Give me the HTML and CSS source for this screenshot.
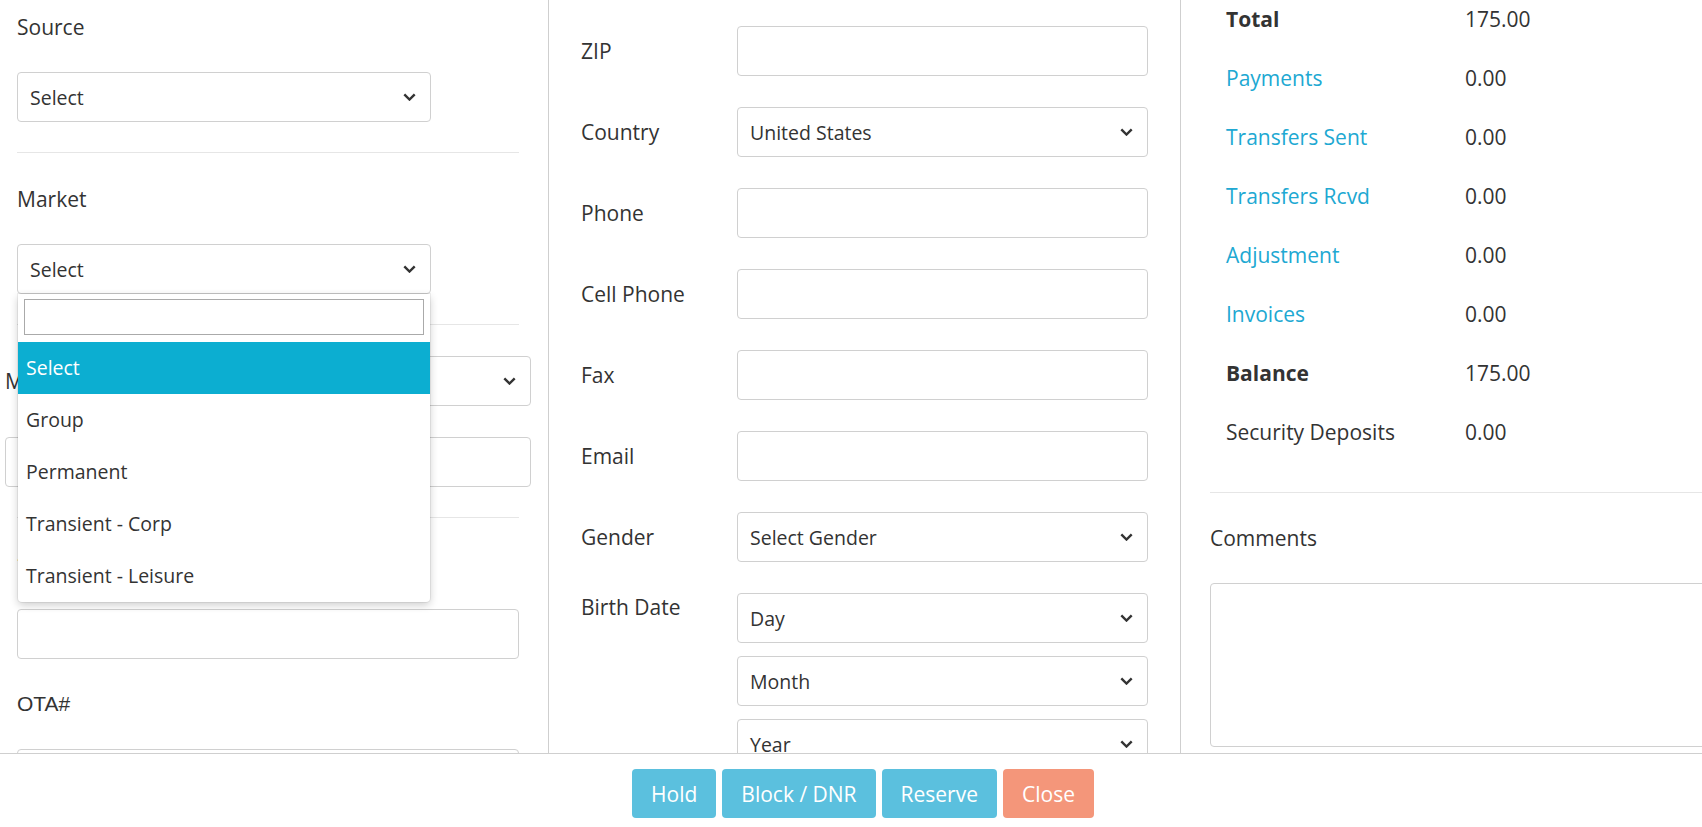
FILE: index.html
```html
<!DOCTYPE html>
<html lang="en">
<head>
<meta charset="utf-8">
<title>Reservation</title>
<link rel="stylesheet" href="styles.css">
</head>
<body>
<div class="page">
  <div class="main">
    <div class="col col-left">
      <div class="group first">
        <label class="lbl">Source</label>
        <div class="select"><span>Select</span><svg class="chev" width="13" height="8" viewBox="0 0 13 8"><path d="M1.3 1.3 L6.5 6.5 L11.7 1.3" fill="none" stroke="#333" stroke-width="2.4"/></svg></div>
      </div>
      <div class="group">
        <label class="lbl">Market</label>
        <div class="select-wrap">
          <div class="select"><span>Select</span><svg class="chev" width="13" height="8" viewBox="0 0 13 8"><path d="M1.3 1.3 L6.5 6.5 L11.7 1.3" fill="none" stroke="#333" stroke-width="2.4"/></svg></div>
          <div class="dropdown">
            <input class="dd-search" type="text">
            <ul class="dd-list">
              <li class="active">Select</li>
              <li>Group</li>
              <li>Permanent</li>
              <li>Transient - Corp</li>
              <li>Transient - Leisure</li>
            </ul>
          </div>
        </div>
      </div>
      <div class="group wide">
        <div class="wide-inner">
          <div class="hrow">
            <label class="hlbl">Meal Plan</label>
            <div class="select grow"><span>Select</span><svg class="chev" width="13" height="8" viewBox="0 0 13 8"><path d="M1.3 1.3 L6.5 6.5 L11.7 1.3" fill="none" stroke="#333" stroke-width="2.4"/></svg></div>
          </div>
          <input class="input full gap-top" type="text">
        </div>
      </div>
      <div class="group last">
        <label class="lbl"><span class="req">*</span> Company</label>
        <input class="input full" type="text">
        <label class="lbl arial gap-top">OTA#</label>
        <input class="input full" type="text">
      </div>
    </div>

    <div class="col col-mid">
      <div class="frow"><label>ZIP</label><input class="input mid" type="text"></div>
      <div class="frow"><label>Country</label><div class="select mid"><span>United States</span><svg class="chev" width="13" height="8" viewBox="0 0 13 8"><path d="M1.3 1.3 L6.5 6.5 L11.7 1.3" fill="none" stroke="#333" stroke-width="2.4"/></svg></div></div>
      <div class="frow"><label>Phone</label><input class="input mid" type="text"></div>
      <div class="frow"><label>Cell Phone</label><input class="input mid" type="text"></div>
      <div class="frow"><label>Fax</label><input class="input mid" type="text"></div>
      <div class="frow"><label>Email</label><input class="input mid" type="text"></div>
      <div class="frow"><label>Gender</label><div class="select mid"><span>Select Gender</span><svg class="chev" width="13" height="8" viewBox="0 0 13 8"><path d="M1.3 1.3 L6.5 6.5 L11.7 1.3" fill="none" stroke="#333" stroke-width="2.4"/></svg></div></div>
      <div class="frow top"><label>Birth Date</label>
        <div class="dates">
          <div class="select mid"><span>Day</span><svg class="chev" width="13" height="8" viewBox="0 0 13 8"><path d="M1.3 1.3 L6.5 6.5 L11.7 1.3" fill="none" stroke="#333" stroke-width="2.4"/></svg></div>
          <div class="select mid"><span>Month</span><svg class="chev" width="13" height="8" viewBox="0 0 13 8"><path d="M1.3 1.3 L6.5 6.5 L11.7 1.3" fill="none" stroke="#333" stroke-width="2.4"/></svg></div>
          <div class="select mid"><span>Year</span><svg class="chev" width="13" height="8" viewBox="0 0 13 8"><path d="M1.3 1.3 L6.5 6.5 L11.7 1.3" fill="none" stroke="#333" stroke-width="2.4"/></svg></div>
        </div>
      </div>
    </div>

    <div class="col col-right">
      <div class="summary">
        <div class="srow"><span class="k bold">Total</span><span class="v">175.00</span></div>
        <div class="srow"><a class="k link">Payments</a><span class="v">0.00</span></div>
        <div class="srow"><a class="k link">Transfers Sent</a><span class="v">0.00</span></div>
        <div class="srow"><a class="k link">Transfers Rcvd</a><span class="v">0.00</span></div>
        <div class="srow"><a class="k link">Adjustment</a><span class="v">0.00</span></div>
        <div class="srow"><a class="k link">Invoices</a><span class="v">0.00</span></div>
        <div class="srow"><span class="k bold">Balance</span><span class="v">175.00</span></div>
        <div class="srow"><span class="k">Security Deposits</span><span class="v">0.00</span></div>
      </div>
      <div class="comments">
        <label class="lbl">Comments</label>
        <textarea class="textarea"></textarea>
      </div>
    </div>
  </div>
  <div class="footer">
    <button class="btn info">Hold</button>
    <button class="btn info">Block / DNR</button>
    <button class="btn info">Reserve</button>
    <button class="btn danger">Close</button>
  </div>
</div>
</body>
</html>
```

FILE: styles.css
```css
html, body {
  margin: 0;
  padding: 0;
  background: #fff;
  overflow: hidden;
}
body {
  font-family: "Open Sans", "Noto Sans", sans-serif;
  color: #333;
}
.page {
  width: 1726px;
  height: 827px;
  display: flex;
  flex-direction: column;
}
.main {
  height: 753px;
  display: flex;
  overflow: hidden;
  flex-shrink: 0;
}
.col {
  box-sizing: border-box;
  height: 100%;
}
.col-left {
  width: 549px;
  border-right: 1px solid #cfcfcf;
  padding: 0 29px 0 17px;
}
.col-mid {
  width: 632px;
  border-right: 1px solid #cfcfcf;
  padding: 26px 32px 0 32px;
}
.col-right {
  flex: 1;
  padding-left: 29px;
  min-width: 0;
}

/* labels */
.lbl {
  display: block;
  font-size: 21px;
  line-height: 28px;
  margin-bottom: 31px;
}
.lbl.arial {
  font-family: "Liberation Sans", Arial, sans-serif;
  font-size: 21px;
}
.req {
  color: #e8813a;
}
.lbl.gap-top,
.input.gap-top {
  margin-top: 31px;
}

/* groups in left column */
.group {
  padding: 32px 0 30px;
  border-bottom: 1px solid #e6e6e6;
}
.group.first {
  padding-top: 13px;
}
.group.wide {
  padding-top: 31px;
}
.group.last {
  border-bottom: none;
}
.wide-inner {
  margin: 0 -12px;
}
.hrow {
  display: flex;
  align-items: center;
}
.hlbl {
  width: 150px;
  font-size: 21px;
  line-height: 28px;
}
.select.grow {
  flex: 1;
  width: auto;
}

/* controls */
.select {
  box-sizing: border-box;
  width: 414px;
  height: 50px;
  border: 1px solid #d0d0d0;
  border-radius: 4px;
  background: #fff;
  display: flex;
  align-items: center;
  justify-content: space-between;
  padding: 0 14px 0 12px;
  font-size: 19.5px;
}
.select.mid {
  width: 411px;
  padding-left: 12px;
}
.chev {
  display: block;
  flex-shrink: 0;
}
.input {
  display: block;
  box-sizing: border-box;
  height: 50px;
  border: 1px solid #d0d0d0;
  border-radius: 4px;
  background: #fff;
  font-family: inherit;
  font-size: 19.5px;
  padding: 0 13px;
  margin: 0;
}
.input.full {
  width: 100%;
}
.input.mid {
  width: 411px;
}

/* dropdown overlay */
.select-wrap {
  position: relative;
  width: 414px;
}
.dropdown {
  position: absolute;
  top: 100%;
  left: 1px;
  right: 1px;
  background: #fff;
  border-radius: 0 0 4px 4px;
  box-shadow: 0 3px 8px rgba(0, 0, 0, 0.2), 0 0 0 1px rgba(0, 0, 0, 0.06);
  padding-top: 5px;
  z-index: 10;
  overflow: hidden;
}
.dd-search {
  display: block;
  box-sizing: border-box;
  width: calc(100% - 12px);
  margin: 0 6px 7px 6px;
  height: 36px;
  border: 1px solid #aaa;
  border-radius: 0;
  padding: 0 6px;
  font-family: inherit;
  font-size: 16px;
}
.dd-list {
  list-style: none;
  margin: 0;
  padding: 0;
}
.dd-list li {
  height: 52px;
  line-height: 52px;
  padding-left: 8px;
  font-size: 19.5px;
  color: #333;
}
.dd-list li.active {
  background: #0caed1;
  color: #fff;
}

/* middle form */
.frow {
  display: flex;
  align-items: center;
  margin-bottom: 31px;
}
.frow.top {
  align-items: flex-start;
}
.frow label {
  width: 156px;
  flex-shrink: 0;
  font-size: 21px;
  line-height: 28px;
}
.dates {
  display: flex;
  flex-direction: column;
  gap: 13px;
}

/* right summary */
.summary {
  padding: 0 0 30px 16px;
  border-bottom: 1px solid #e6e6e6;
}
.srow {
  display: flex;
  padding: 15px 0 16px;
  font-size: 21px;
  line-height: 28px;
}
.srow:first-child {
  padding-top: 5px;
}
.srow .k {
  width: 239px;
  flex-shrink: 0;
}
.bold {
  font-weight: 700;
}
.link {
  color: #20a8d2;
  text-decoration: none;
}
.comments {
  padding-top: 31px;
}
.textarea {
  display: block;
  box-sizing: border-box;
  width: 100%;
  height: 164px;
  border: 1px solid #d0d0d0;
  border-radius: 4px;
  resize: none;
  margin: 0;
  font-family: inherit;
}

/* footer */
.footer {
  flex: 1;
  border-top: 1px solid #cfcfcf;
  display: flex;
  justify-content: center;
  align-items: flex-start;
  gap: 6px;
  padding-top: 15px;
}
.btn {
  height: 49px;
  padding: 0 19px;
  border: none;
  border-radius: 4px;
  color: #fff;
  font-family: "Open Sans", sans-serif;
  font-size: 21px;
  cursor: pointer;
}
.btn.info {
  background: #5bc0de;
}
.btn.danger {
  background: #f4967a;
}
```
